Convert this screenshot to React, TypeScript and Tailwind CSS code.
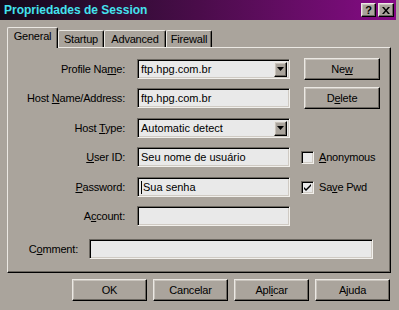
const face = "bg-[#aaa49c]";
const raised =
  "border border-t-[#ebe8e3] border-l-[#ebe8e3] border-r-black border-b-black shadow-[inset_-1px_-1px_0_#6b6760,inset_1px_1px_0_#c8c3bc]";
const sunken =
  "border border-t-[#6b6760] border-l-[#6b6760] border-r-[#f2f0ec] border-b-[#f2f0ec] shadow-[inset_1px_1px_0_#000,inset_-1px_-1px_0_#cfcac3]";

const Label = ({ w, children }: { w: string; children: React.ReactNode }) => (
  <div className={`${w} shrink-0 text-right pr-[1px] text-[11px] tracking-[-0.2px]`}>{children}</div>
);

const TextBox = ({ value, w = "w-[153px]", caret = false }: { value?: string; w?: string; caret?: boolean }) => (
  <div className={`${w} h-[20px] ${sunken} bg-[#e9e9e9] flex items-center pl-[3px] text-[11px] leading-none`}>
    {caret && <span className="w-px h-[13px] bg-black mr-px" />}
    {value}
  </div>
);

const Combo = ({ value }: { value: string }) => (
  <div className={`w-[153px] h-[20px] ${sunken} bg-[#e9e9e9] flex items-center pl-[3px] pr-[2px] text-[11px] leading-none`}>
    <span className="flex-1">{value}</span>
    <div className={`w-[13px] h-[15px] ${face} ${raised} flex items-center justify-center`}>
      <svg width="7" height="4" viewBox="0 0 7 4">
        <path d="M0 0h7L3.5 4z" fill="#000" />
      </svg>
    </div>
  </div>
);

const Button = ({ children, w = "w-[76px]" }: { children: React.ReactNode; w?: string }) => (
  <div className={`${w} h-[22px] ${face} ${raised} flex items-center justify-center text-[11px] tracking-[-0.2px]`}>
    {children}
  </div>
);

const Check = ({ checked, children }: { checked?: boolean; children: React.ReactNode }) => (
  <div className="flex items-center ml-[11px]">
    <div className={`w-[13px] h-[13px] ${sunken} bg-[#e9e9e9] flex items-center justify-center`}>
      {checked && (
        <svg width="9" height="9" viewBox="0 0 9 9">
          <path d="M1 4l2 2 5-5v2l-5 5-2-2z" fill="#000" />
        </svg>
      )}
    </div>
    <span className="ml-[5px] text-[11px] tracking-[-0.2px]">{children}</span>
  </div>
);

const Tab = ({ label, w, active }: { label: string; w: string; active?: boolean }) => (
  <div
    className={`${w} ${active ? "h-[21px] -mb-px z-10 pb-[3px]" : "h-[17px]"} ${face} border-t border-l border-t-[#ebe8e3] border-l-[#ebe8e3] border-r border-r-black shadow-[inset_-1px_0_0_#6b6760] rounded-t-[2px] flex items-center justify-center text-[11px] tracking-[-0.2px]`}
  >
    {label}
  </div>
);

export default function App() {
  return (
    <div
      className={`w-[399px] h-[310px] ${face} overflow-hidden text-black`}
      style={{ fontFamily: '"Liberation Sans", Arial, sans-serif' }}
    >
      {/* Title bar */}
      <div className="mr-[3px] h-[20px] flex items-center bg-gradient-to-r from-[#12081a] via-[#4a0c4a] to-[#860a86] pl-[4px] pr-[2px]">
        <span className="flex-1 text-[12px] font-bold text-[#44e2ee]">Propriedades de Session</span>
        <div className={`w-[15px] h-[14px] ${face} ${raised} flex items-center justify-center text-[11px] font-bold leading-none`}>?</div>
        <div className={`ml-[2px] w-[16px] h-[14px] ${face} ${raised} flex items-center justify-center`}>
          <svg width="8" height="7" viewBox="0 0 8 7">
            <path d="M0 0h2l2 2.5L6 0h2L5 3.5 8 7H6L4 4.5 2 7H0l3-3.5z" fill="#000" />
          </svg>
        </div>
      </div>

      {/* Tabs */}
      <div className="mt-[7px] ml-[7px] h-[20px] flex items-end relative">
        <Tab label="General" w="w-[51px]" active />
        <Tab label="Startup" w="w-[46px]" />
        <Tab label="Advanced" w="w-[62px]" />
        <Tab label="Firewall" w="w-[46px]" />
      </div>

      {/* Panel */}
      <div className="ml-[7px] w-[384px] h-[226px] border border-t-[#ebe8e3] border-l-[#ebe8e3] border-r-black border-b-black shadow-[inset_-1px_-1px_0_#6b6760] pt-[10px] flex flex-col">
        <div className="flex items-center h-[22px]">
          <Label w="w-[118px]">
            Profile Na<u>m</u>e:
          </Label>
          <div className="ml-[11px]">
            <Combo value="ftp.hpg.com.br" />
          </div>
          <div className="ml-[14px]">
            <Button>
              Ne<u>w</u>
            </Button>
          </div>
        </div>
        <div className="flex items-center h-[22px] mt-[7px]">
          <Label w="w-[118px]">
            Host <u>N</u>ame/Address:
          </Label>
          <div className="ml-[11px]">
            <TextBox value="ftp.hpg.com.br" />
          </div>
          <div className="ml-[14px]">
            <Button>
              D<u>e</u>lete
            </Button>
          </div>
        </div>
        <div className="flex items-center h-[22px] mt-[8px]">
          <Label w="w-[118px]">
            Host <u>T</u>ype:
          </Label>
          <div className="ml-[11px]">
            <Combo value="Automatic detect" />
          </div>
        </div>
        <div className="flex items-center h-[22px] mt-[7px]">
          <Label w="w-[118px]">
            <u>U</u>ser ID:
          </Label>
          <div className="ml-[11px]">
            <TextBox value="Seu nome de usuário" />
          </div>
          <Check>
            <u>A</u>nonymous
          </Check>
        </div>
        <div className="flex items-center h-[22px] mt-[8px]">
          <Label w="w-[118px]">
            <u>P</u>assword:
          </Label>
          <div className="ml-[11px]">
            <TextBox value="Sua senha" caret />
          </div>
          <Check checked>
            Sa<u>v</u>e Pwd
          </Check>
        </div>
        <div className="flex items-center h-[22px] mt-[7px]">
          <Label w="w-[118px]">
            A<u>c</u>count:
          </Label>
          <div className="ml-[11px]">
            <TextBox />
          </div>
        </div>
        <div className="flex items-center h-[22px] mt-[11px]">
          <Label w="w-[71px]">
            C<u>o</u>mment:
          </Label>
          <div className="ml-[10px]">
            <TextBox w="w-[284px]" />
          </div>
        </div>
      </div>

      {/* Dialog buttons */}
      <div className="mt-[6px] pl-[72px] flex gap-[6px]">
        <Button w="w-[75px]">OK</Button>
        <Button w="w-[75px]">Cancelar</Button>
        <Button w="w-[75px]">
          Apl<u>i</u>car
        </Button>
        <Button w="w-[75px]">Ajuda</Button>
      </div>
    </div>
  );
}
